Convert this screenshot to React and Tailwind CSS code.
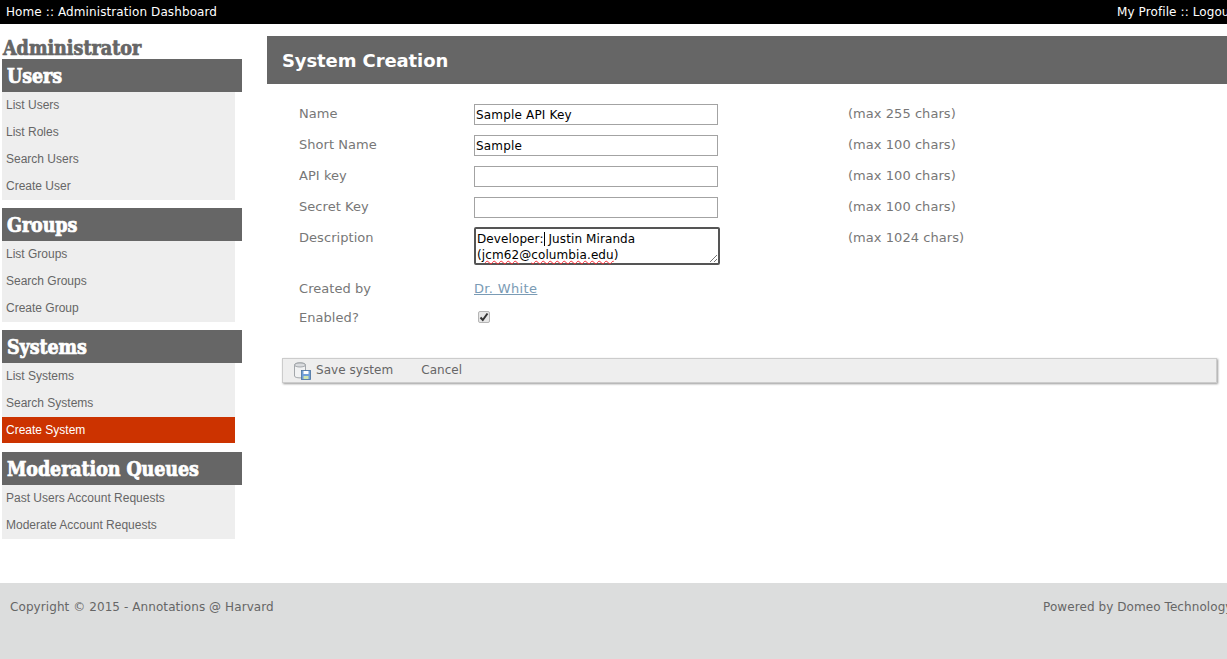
const slab = "font-['DejaVu_Serif',serif] font-bold [font-stretch:condensed] [-webkit-text-stroke:0.7px_currentColor]";
const sections = [
  { title: "Users", mt: "", items: ["List Users", "List Roles", "Search Users", "Create User"] },
  { title: "Groups", mt: "mt-2", items: ["List Groups", "Search Groups", "Create Group"] },
  { title: "Systems", mt: "mt-2", items: ["List Systems", "Search Systems", "Create System"] },
  { title: "Moderation Queues", mt: "mt-[9px]", items: ["Past Users Account Requests", "Moderate Account Requests"] },
];
const fields = [
  ["Name", "Sample API Key", "(max 255 chars)"],
  ["Short Name", "Sample", "(max 100 chars)"],
  ["API key", "", "(max 100 chars)"],
  ["Secret Key", "", "(max 100 chars)"],
];
function Section({ title, items, mt }) {
  return (
    <div className={mt}>
      <div className={`h-[33px] w-[240px] bg-[#666666] pl-[5px] text-[19.5px] leading-[35px] tracking-[-0.1px] text-white ${slab}`}>{title}</div>
      <ul className="w-[233px] bg-[#eeeeee] font-['Liberation_Sans',sans-serif] text-[12px] text-[#666666]">
        {items.map((i) => (
          <li key={i} className={i === "Create System" ? "h-[26px] bg-[#cc3300] pl-1 leading-[26px] text-white" : "h-[27px] pl-1 leading-[26px]"}>{i}</li>
        ))}
      </ul>
    </div>
  );
}
function SaveIcon() {
  return (
    <svg width="17" height="18" viewBox="0 0 17 18" className="shrink-0">
      <path d="M0.500 3c0-3 11-3 11 0v11c0 2.500-11 2.500-11 0z" fill="#f1f2f3" stroke="#a3a7ab" />
      <ellipse cx="6" cy="3" rx="5.500" ry="2" fill="#d9dbde" stroke="#a3a7ab" />
      <rect x="7.500" y="8.500" width="9" height="9" fill="#6f9fd8" stroke="#47709f" strokeWidth="0.8" />
      <rect x="9.500" y="9" width="5" height="3" fill="#ffffff" />
      <rect x="9.500" y="14" width="5" height="3" fill="#cfe5b0" />
    </svg>
  );
}
export default function App() {
  return (
    <div className="flex h-[659px] w-[1227px] flex-col overflow-hidden bg-white font-['DejaVu_Sans',sans-serif] text-[13px] text-[#666666]">
      <header className="flex h-6 w-[1260px] shrink-0 items-center justify-between bg-black pl-1.5 text-[12px] tracking-[0.1px] text-white">
        <span>Home :: Administration Dashboard</span>
        <span className="w-[143px]">My Profile :: Logout</span>
      </header>
      <div className="flex flex-1">
        <aside className="ml-0.5 w-[265px] shrink-0">
          <div className={`mt-[13px] h-[22px] pl-px text-[19.5px] leading-[23px] text-[#666666] ${slab}`}>Administrator</div>
          {sections.map((s) => <Section key={s.title} {...s} />)}
        </aside>
        <main className="min-w-0 flex-1 pt-3">
          <h1 className="h-12 bg-[#666666] pl-[15px] text-[18px] font-bold leading-[50px] tracking-[-0.1px] text-white">System Creation</h1>
          <div className="mt-[20px] grid grid-cols-[175px_374px_1fr] items-start pl-8 tracking-[0.05px] text-[#777] [grid-auto-rows:31px]">
            {fields.map(([label, value, hint]) => (
              <div key={label} className="contents">
                <label className="leading-[20px]">{label}</label>
                <input readOnly value={value} className="h-[21px] w-[244px] border border-[#a3a3a3] px-px text-[12px] tracking-[0.18px] text-black outline-none" />
                <span className="leading-[20px] text-[#777]">{hint}</span>
              </div>
            ))}
            <label className="leading-[20px]">Description</label>
            <div className="relative -mt-px h-[38px] w-[246px] whitespace-pre rounded-[2px] border-2 border-[#555555] px-px text-[12px] leading-[16px] tracking-[0.1px] text-black">
              <div className="pt-[2px]">Developer:<span className="border-l border-black"></span> Justin Miranda</div>
              <div>(<span className="underline decoration-wavy decoration-red-500 decoration-1 underline-offset-[1px]">jcm62</span>@<span className="underline decoration-wavy decoration-red-500 decoration-1 underline-offset-[1px]">columbia.edu</span>)</div>
              <svg width="10" height="10" viewBox="0 0 10 10" className="absolute bottom-0 right-0"><path d="M9 2 2 9M9 6 6 9" stroke="#777" fill="none" /></svg>
            </div>
            <span className="leading-[20px]">(max 1024 chars)</span>
          </div>
          <div className="mt-[20px] grid grid-cols-[175px_1fr] items-center gap-y-[9px] pl-8 tracking-[0.05px] text-[#777]">
            <span className="leading-[20px]">Created by</span>
            <a className="leading-[20px] tracking-[0.35px] text-[#7a9bb5] underline">Dr. White</a>
            <span className="leading-[20px]">Enabled?</span>
            <span className="mb-[2px] ml-1 flex h-3 w-3 items-center justify-center rounded-[2px] border border-[#b5b5b5] bg-[#e6e6e6]">
              <svg width="10" height="10" viewBox="0 0 10 10"><path d="M1.500 5.500 3.800 8l4.700-6.500" fill="none" stroke="#333" strokeWidth="2" /></svg>
            </span>
          </div>
          <div className="mt-[30px] ml-[15px] mr-[10px] flex h-[25px] items-center border border-[#cccccc] bg-[#eeeeee] pl-[11px] text-[12px] leading-[20px] tracking-[0.05px] shadow-[1px_1px_2px_#999999]">
            <SaveIcon />
            <span className="mb-0.5 ml-[5px]">Save system</span>
            <span className="mb-0.5 ml-[28px]">Cancel</span>
          </div>
        </main>
      </div>
      <footer className="flex h-[76px] w-[1280px] shrink-0 justify-between bg-[#dcdddd] px-2.5 pt-[15px] text-[12px] leading-[18px] tracking-[0.08px] text-[#666666]">
        <span>Copyright © 2015 - Annotations @ Harvard</span>
        <span className="w-[227px]">Powered by Domeo Technology</span>
      </footer>
    </div>
  );
}
